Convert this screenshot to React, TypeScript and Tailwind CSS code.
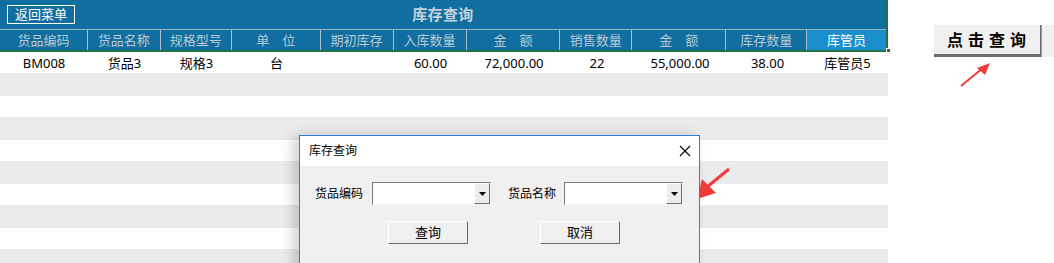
import React from "react";

const cols = [
  { label: "货品编码", w: 88, v: "BM008" },
  { label: "货品名称", w: 73, v: "货品3" },
  { label: "规格型号", w: 71, v: "规格3" },
  { label: "单　位", w: 89, v: "台" },
  { label: "期初库存", w: 73, v: "" },
  { label: "入库数量", w: 73, v: "60.00" },
  { label: "金　额", w: 94, v: "72,000.00" },
  { label: "销售数量", w: 72, v: "22" },
  { label: "金　额", w: 94, v: "55,000.00" },
  { label: "库存数量", w: 81, v: "38.00" },
  { label: "库管员", w: 79, v: "库管员5" },
];

const stripes = [23, 21, 23, 21, 23, 21, 23, 21, 23];

function Combo() {
  return (
    <div className="flex h-[23px] w-[119px] border border-t-[#7a7a7a] border-l-[#7a7a7a] border-b-[#f4f4f4] border-r-[#f4f4f4] bg-white">
      <div className="flex-1" />
      <div className="flex w-[16px] items-center justify-center border border-t-white border-l-white border-b-[#6e6e6e] border-r-[#6e6e6e] bg-[#ececec]">
        <svg width="7" height="4" viewBox="0 0 7 4">
          <path d="M0 0h7L3.5 4z" fill="#000" />
        </svg>
      </div>
    </div>
  );
}

function WinButton({ text }: { text: string }) {
  return (
    <div className="flex h-[23px] w-[80px] items-center justify-center border border-t-white border-l-white border-b-[#6a6a6a] border-r-[#6a6a6a] bg-[#f0f0f0] text-[13px] text-black">
      {text}
    </div>
  );
}

export default function App() {
  return (
    <div
      className="relative h-[263px] w-[1054px] overflow-hidden bg-white"
      style={{ fontFamily: '"Noto Sans", "Noto Sans CJK SC", sans-serif' }}
    >
      <div className="flex">
        {/* sheet */}
        <div className="w-[888px]">
          <div className="border-r-2 border-[#217346] bg-[#116ea0]">
            <div className="relative flex h-[29px] items-center justify-center">
              <div className="absolute left-[7px] top-[5px] flex h-[19px] w-[68px] items-center justify-center border border-white text-[13px] leading-none text-white">
                返回菜单
              </div>
              <span className="text-[15px] font-bold tracking-wide text-[#c7d2da]">库存查询</span>
            </div>
            <div className="flex h-[21px] border-t border-[#8fb3c9]">
              {cols.map((c, i) => (
                <div
                  key={i}
                  style={{ width: c.w }}
                  className={
                    i === cols.length - 1
                      ? "flex items-center justify-center bg-[#1b8fcd] text-[13px] leading-none text-white"
                      : "flex items-center justify-center border-r border-[#a9bfcd] text-[13px] leading-none text-[#b9c8d3]"
                  }
                >
                  {c.label}
                </div>
              ))}
            </div>
          </div>
          <div className="relative h-[2px] bg-[#217346]">
            <div className="absolute right-[-3px] top-[-2px] h-[5px] w-[5px] border border-white bg-[#217346]" />
          </div>
          <div className="mt-[1px] flex h-[20px] bg-white">
            {cols.map((c, i) => (
              <div
                key={i}
                style={{ width: c.w }}
                className="flex items-center justify-center text-[13px] leading-none text-black"
              >
                {c.v}
              </div>
            ))}
          </div>
          {stripes.map((h, i) => (
            <div
              key={i}
              style={{ height: h }}
              className={i % 2 === 0 ? "bg-[#ebebeb]" : "bg-white"}
            />
          ))}
        </div>

        {/* right side button */}
        <div className="flex flex-1 pt-[25px] pl-[46px]">
          <div className="flex h-[32px] w-[107px] items-center justify-center border-b-[3px] border-r border-[#6b6b6b] bg-[#f0f0f0] pl-[4px] text-[16px] font-bold tracking-[5px] text-black">
            点击查询
          </div>
          <div className="h-[32px] flex-1 border-l border-[#9a9a9a] bg-[#f0f0f0]" />
        </div>
      </div>

      {/* arrows */}
      <svg className="absolute left-[958px] top-[60px]" width="36" height="30" viewBox="0 0 36 30">
        <path d="M3 26 L26 7" stroke="#f23c3c" strokeWidth="2" />
        <path d="M32 3 L19 8 L27 15 Z" fill="#f23c3c" />
      </svg>
      <svg className="absolute left-[694px] top-[166px]" width="38" height="36" viewBox="0 0 38 36">
        <path d="M35 3 L13 21" stroke="#f23c3c" strokeWidth="3" />
        <path d="M3 33 L8 13 L22 27 Z" fill="#f23c3c" />
      </svg>

      {/* dialog */}
      <div className="absolute left-[299px] top-[135px] h-[140px] w-[401px] border border-[#2b7fd4] bg-[#f0f0f0] shadow-[-6px_0_12px_rgba(0,0,0,0.18)]">
        <div className="flex h-[30px] items-center justify-between bg-white pl-[9px] pr-[8px]">
          <span className="text-[12px] text-black">库存查询</span>
          <svg width="12" height="12" viewBox="0 0 12 12">
            <path d="M1 1 L11 11 M11 1 L1 11" stroke="#000" strokeWidth="1.1" />
          </svg>
        </div>
        <div className="flex items-center pl-[15px] pt-[16px]">
          <span className="w-[57px] text-[12px] text-black">货品编码</span>
          <Combo />
          <span className="ml-[17px] w-[56px] text-[12px] text-black">货品名称</span>
          <Combo />
        </div>
        <div className="flex gap-[72px] pl-[88px] pt-[16px]">
          <WinButton text="查询" />
          <WinButton text="取消" />
        </div>
      </div>
    </div>
  );
}
